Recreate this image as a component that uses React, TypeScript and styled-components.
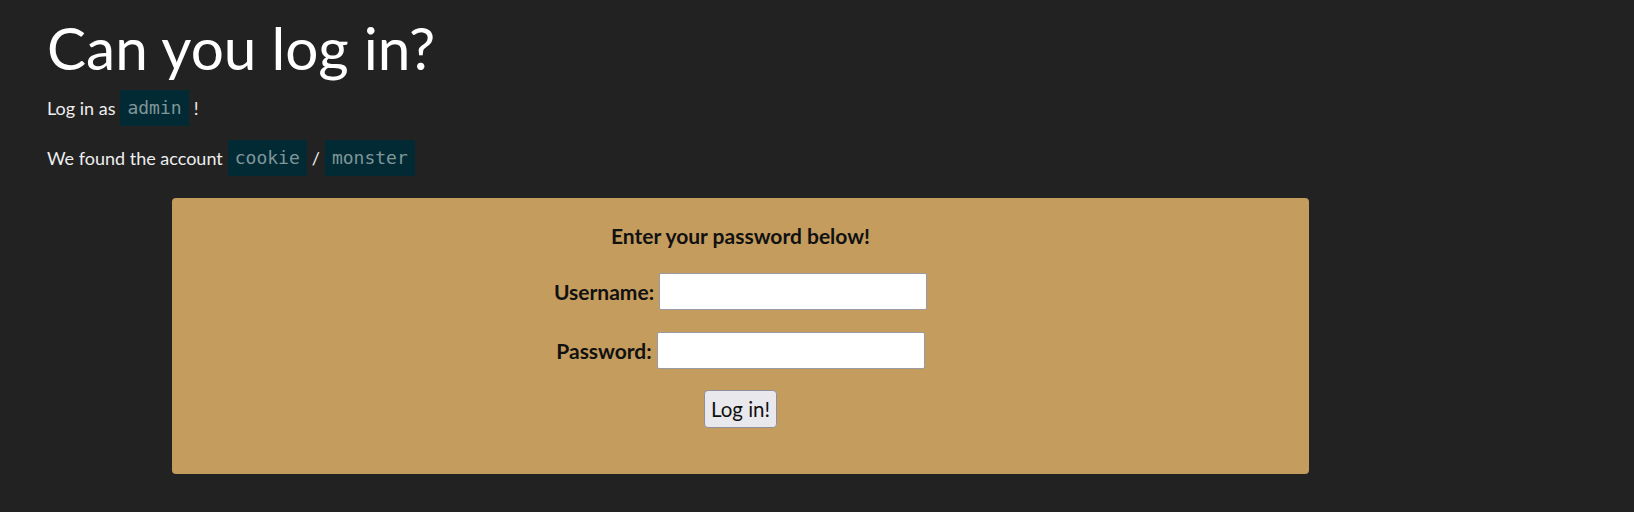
import React from "react";
import styled, { createGlobalStyle } from "styled-components";

const Global = createGlobalStyle`
  html, body { margin: 0; padding: 0; background: #222222; }
  body {
    font-family: Lato, "Noto Sans", sans-serif;
    color: #eeeeee;
    font-size: 18px;
  }
`;

const Page = styled.main`
  padding: 12px 48px 40px 47px;
`;

const Title = styled.h1`
  font-size: 58.5px;
  font-weight: 400;
  line-height: 1.2;
  margin: 0 0 8px 0;
  color: #ffffff;
`;

const Para = styled.p`
  margin: 0 0 14px 0;
  line-height: 36px;
  display: flex;
  align-items: center;
  gap: 5px;
`;

const Code = styled.code`
  font-family: "DejaVu Sans Mono", monospace;
  font-size: 18px;
  color: #7f9699;
  background: #022a35;
  padding: 0 7px;
  line-height: 36px;
  display: inline-block;
`;

const Panel = styled.form`
  width: 1137px;
  height: 276px;
  box-sizing: border-box;
  margin: 22px 0 0 125px;
  background: #c49c5e;
  border-radius: 4px;
  color: #111111;
  display: flex;
  flex-direction: column;
  align-items: center;
  padding-top: 22px;
`;

const Heading = styled.div`
  font-weight: 700;
  font-size: 21px;
  line-height: 32px;
  margin-bottom: 21px;
`;

const Row = styled.label`
  display: flex;
  align-items: center;
  gap: 5px;
  font-weight: 700;
  font-size: 21px;
  margin-bottom: 22px;
`;

const Input = styled.input`
  width: 268px;
  height: 37px;
  box-sizing: border-box;
  border: 1px solid #9a9aa3;
  border-radius: 2px;
  background: #ffffff;
  padding: 2px 4px;
  font: inherit;
  font-weight: 400;
`;

const Button = styled.button`
  width: 73px;
  height: 38px;
  box-sizing: border-box;
  background: #e9e9ed;
  border: 1px solid #8f8f9d;
  border-radius: 4px;
  font-family: Lato, sans-serif;
  font-size: 20.5px;
  color: #111;
  padding: 0;
  margin-top: -1px;
`;

export default function App() {
  return (
    <>
      <Global />
      <Page>
        <Title>Can you log in?</Title>
        <Para>
          Log in as <Code>admin</Code>!
        </Para>
        <Para>
          We found the account <Code>cookie</Code> / <Code>monster</Code>
        </Para>
        <Panel onSubmit={(e) => e.preventDefault()}>
          <Heading>Enter your password below!</Heading>
          <Row>
            Username: <Input type="text" name="username" />
          </Row>
          <Row>
            Password: <Input type="password" name="password" />
          </Row>
          <Button type="submit">Log in!</Button>
        </Panel>
      </Page>
    </>
  );
}
